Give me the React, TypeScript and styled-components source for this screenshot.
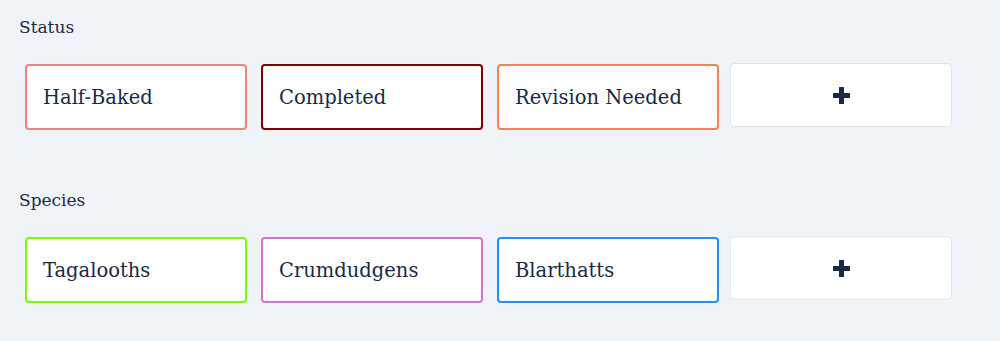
import React from "react";
import styled, { createGlobalStyle } from "styled-components";

const Global = createGlobalStyle`
  html, body {
    margin: 0;
    padding: 0;
    background: #f0f4f8;
  }
  body {
    font-family: "DejaVu Serif", "Liberation Serif", serif;
    color: #182a44;
  }
`;

const Page = styled.div`
  padding: 15px 0 0 19px;
  width: 1000px;
  height: 341px;
  box-sizing: border-box;
`;

const Section = styled.section`
  display: flex;
  flex-direction: column;
  margin-bottom: 58px;
`;

const Label = styled.div`
  font-size: 17px;
  line-height: 24px;
  height: 24px;
  margin-bottom: 25px;
`;

const Row = styled.div`
  display: flex;
  align-items: flex-start;
  padding-left: 6px;
  height: 66px;
`;

const Tag = styled.div<{ $color: string }>`
  box-sizing: border-box;
  width: 222px;
  height: 66px;
  margin-right: 14px;
  border: 2px solid ${(p) => p.$color};
  border-radius: 4px;
  background: #fff;
  display: flex;
  align-items: center;
  padding-left: 16px;
  font-size: 19.5px;
  color: #182a44;
`;

const AddButton = styled.button`
  box-sizing: border-box;
  width: 222px;
  height: 64px;
  margin-top: -1px;
  margin-left: -3px;
  border: 1px solid #e1e4e8;
  border-radius: 5px;
  background: #fff;
  display: flex;
  align-items: center;
  justify-content: center;
  padding: 0;
  cursor: pointer;
`;

const PlusIcon = () => (
  <svg width="17" height="17" viewBox="0 0 17 17" aria-hidden="true">
    <rect x="0" y="6" width="17" height="5" rx="0.6" fill="#182a44" />
    <rect x="6" y="0" width="5" height="17" rx="0.6" fill="#182a44" />
  </svg>
);

const groups = [
  {
    title: "Status",
    tags: [
      { name: "Half-Baked", color: "#f08080" },
      { name: "Completed", color: "#800000" },
      { name: "Revision Needed", color: "#ff7f50" },
    ],
  },
  {
    title: "Species",
    tags: [
      { name: "Tagalooths", color: "#7cfc00" },
      { name: "Crumdudgens", color: "#da70d6" },
      { name: "Blarthatts", color: "#1e90ff" },
    ],
  },
];

export default function App() {
  return (
    <>
      <Global />
      <Page>
        {groups.map((g) => (
          <Section key={g.title}>
            <Label>{g.title}</Label>
            <Row>
              {g.tags.map((t) => (
                <Tag key={t.name} $color={t.color}>
                  {t.name}
                </Tag>
              ))}
              <AddButton aria-label="Add">
                <PlusIcon />
              </AddButton>
            </Row>
          </Section>
        ))}
      </Page>
    </>
  );
}
